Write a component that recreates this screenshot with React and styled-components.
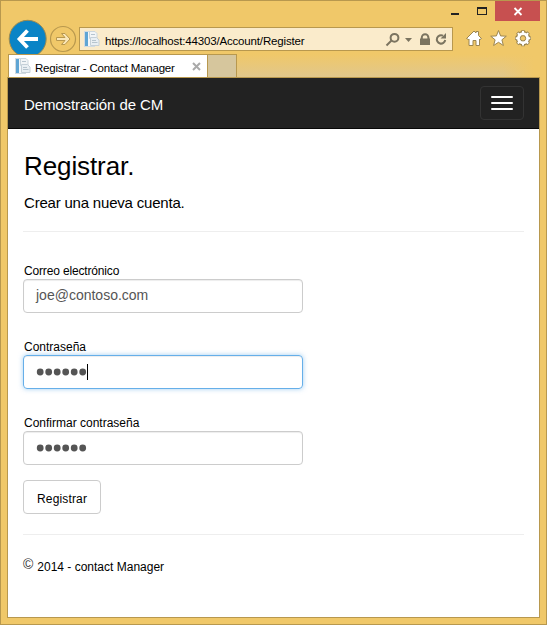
import React from "react";
import styled, { createGlobalStyle } from "styled-components";

const Global = createGlobalStyle`
  *, *::before, *::after { box-sizing: border-box; }
  body { margin: 0; overflow: hidden; }
`;

const Window = styled.div`
  width: 547px;
  height: 625px;
  display: flex;
  flex-direction: column;
  padding: 0 6px 6px 6px;
  background: #f0c869;
  border: 1px solid #b8984e;
  font-family: "Liberation Sans", Arial, sans-serif;
  color: #000;
`;

const Text = styled.span`
  display: block;
  white-space: pre;
  font-size: ${(p) => p.$size}px;
  line-height: ${(p) => p.$line || 16}px;
  letter-spacing: ${(p) => p.$track || 0}px;
  color: ${(p) => p.$color || "inherit"};
`;

const TitleBar = styled.header`
  height: 20px;
  flex: none;
  display: flex;
  justify-content: flex-end;
`;

const CaptionButtons = styled.svg`
  display: block;
`;

const Toolbar = styled.div`
  height: 33px;
  flex: none;
  display: flex;
  align-items: flex-start;
`;

const NavButtons = styled.svg`
  display: block;
  flex: none;
  margin-top: -2px;
`;

const AddressBar = styled.div`
  width: 374px;
  height: 24px;
  margin-top: 6px;
  flex: none;
  display: flex;
  align-items: center;
  background: #faebcb;
  border: 1px solid #b8984e;
  padding-left: 3px;
`;

const Url = styled(Text)`
  flex: 1;
  margin: 3px 0 0 5px;
`;

const AddressTools = styled.svg`
  display: block;
  flex: none;
`;

const BrowserTools = styled.svg`
  display: block;
  margin: 5px 0 0 10px;
`;

const TabStrip = styled.div`
  position: relative;
  height: 23px;
  flex: none;
  display: flex;
  margin-left: 1px;
  background: linear-gradient(to right, rgba(240, 200, 105, 0) 93%, #f0c869 99%),
    linear-gradient(#f0c869, #e1c78b);
`;

const Tab = styled.div`
  width: 200px;
  height: 23px;
  display: flex;
  align-items: center;
  padding-left: 5px;
  background: #fff;
  border: 1px solid #b8984e;
  border-bottom: 0;
`;

const TabTitle = styled(Text)`
  flex: 1;
  margin: 4px 0 0 4px;
`;

const TabClose = styled.svg`
  display: block;
  margin-right: 6px;
`;

const NewTab = styled.div`
  width: 29px;
  height: 23px;
  background: #d6c69d;
  border: 1px solid #b8984e;
  border-left: 0;
  border-bottom: 0;
`;

const Viewport = styled.div`
  flex: 1;
  min-height: 0;
  display: flex;
  flex-direction: column;
  background: #fff;
  border: 1px solid #b8984e;
`;

const Navbar = styled.nav`
  height: 51px;
  flex: none;
  display: flex;
  align-items: center;
  justify-content: space-between;
  padding: 0 15px 0 16px;
  background: #222;
  border-bottom: 1px solid #080808;
`;

const Toggle = styled.button`
  width: 44px;
  height: 34px;
  padding: 0 10px;
  display: flex;
  flex-direction: column;
  justify-content: center;
  gap: 4px;
  background: transparent;
  border: 1px solid #333;
  border-radius: 4px;
`;

const Bar = styled.span`
  height: 2px;
  background: #fff;
  border-radius: 1px;
`;

const Page = styled.main`
  display: flex;
  flex-direction: column;
  padding: 22px 15px 0;
`;

const Rule = styled.hr`
  width: 100%;
  height: 1px;
  flex: none;
  margin: 0;
  border: 0;
  background: #eee;
`;

const Form = styled.form`
  display: flex;
  flex-direction: column;
  align-items: flex-start;
  margin: 31px 0 20px;
`;

const Field = styled.label`
  height: 76px;
  display: flex;
  flex-direction: column;
`;

const Control = styled.span`
  width: 280px;
  height: 34px;
  display: flex;
  align-items: center;
  padding: 0 12px;
  border: 1px solid ${(p) => (p.$focused ? "#66afe9" : "#ccc")};
  border-radius: 4px;
  box-shadow: ${(p) =>
    p.$focused
      ? "inset 0 1px 1px rgba(0,0,0,.075), 0 0 5px rgba(102,175,233,.6)"
      : "inset 0 1px 1px rgba(0,0,0,.075)"};
`;

const Value = styled(Text)`
  margin-top: -2px;
`;

const Caret = styled.span`
  width: 1px;
  height: 16px;
  background: #000;
`;

const Submit = styled.button`
  width: 78px;
  height: 34px;
  margin-top: -11px;
  padding: 3px 0 0 13px;
  text-align: left;
  font-family: inherit;
  color: #000;
  background: #fff;
  border: 1px solid #ccc;
  border-radius: 4px;
`;

const Footer = styled.footer`
  display: flex;
  gap: 4px;
  padding-top: 20px;
`;

const Brand = styled(Text)`
  margin-top: 4px;
`;
const Heading = styled(Text)`
  margin: 0 0 0 1px;
  font-weight: 400;
`;
const Lead = styled(Text)`
  margin: 13px 0 19px 1px;
`;
const LabelText = styled(Text)`
  margin: 0 0 0 1px;
`;
const Copy = styled(Text)`
  margin-top: 4px;
`;

const PageIcon = () => (
  <svg width="17" height="16" viewBox="0 0 17 16">
    <rect x="1.500" y="0.500" width="10" height="15" fill="#f4f7f9" stroke="#d2dbe1" />
    <rect x="2" y="1" width="3" height="14" fill="#5fa5d4" />
    <path d="M6.500 .500h5.500l2 2v5h-7.500z" fill="#f2f5f7" stroke="#cbd6dd" />
    <path d="M8 3.500h4" stroke="#b6c4ce" />
    <path d="M7.500 6.500h6l2.500 2.500v5.500h-8.500z" fill="#e9eff3" stroke="#c5d0d8" />
    <path d="M9 9.500h4M9 11.500h5.500" stroke="#b6c4ce" />
  </svg>
);

const Password = () => (
  <svg width="51" height="10" viewBox="0 0 51 10">
    {Array.from({ length: 6 }, (_, i) => (
      <circle key={i} cx={4.2 + i * 8.5} cy="5" r="3.400" fill="#555" />
    ))}
  </svg>
);

export default function App() {
  return (
    <Window>
      <Global />
      <TitleBar>
        <CaptionButtons width="96" height="20" viewBox="444 1 96 20">
          <rect x="451" y="13" width="8" height="2" fill="#222" />
          <path d="M477 7h10v8h-10zM478 9v5h8V9z" fill="#222" fillRule="evenodd" />
          <rect x="495" y="1" width="45" height="20" fill="#c75050" />
          <path d="M514.500 8l7 7M521.500 8l-7 7" stroke="#fff" strokeWidth="1.800" />
        </CaptionButtons>
      </TitleBar>
      <Toolbar>
        <NavButtons width="72" height="39" viewBox="7 19 72 39">
          <circle cx="27.700" cy="38.800" r="18.500" fill="#0a84c6" stroke="#9c8a50" strokeWidth="1" />
          <path d="M38 39H20M27.500 30.500L19.500 39l8 8.500" fill="none" stroke="#fff" strokeWidth="3.800" />
          <circle cx="63" cy="39" r="12.500" fill="none" stroke="#b8984e" strokeWidth="1.200" />
          <path d="M56.500 37.500h8.500l-3.500-4h3.500l5 5.500-5 5.500h-3.500l3.500-4h-8.500z" fill="#fae7b8" stroke="#b8984e" strokeWidth="1" />
        </NavButtons>
        <AddressBar>
          <PageIcon />
          <Url $size={11.5} $track={-0.16}>https://localhost:44303/Account/Register</Url>
          <AddressTools width="69" height="22" viewBox="383 28 69 22">
            <g fill="none" stroke="#7b7460" strokeWidth="2">
              <circle cx="394.500" cy="37.800" r="3.900" />
              <path d="M391.500 40.500l-5 5" />
              <path d="M421.800 39v-1.500a3.300 3.300 0 0 1 6.600 0V39" />
              <path d="M443 35.700a4.200 4.200 0 1 0 2.200 4.300" />
            </g>
            <path d="M405 38h7l-3.500 4zM420 38.500h10V45H420zM440.500 38.500h5.500V33z" fill="#7b7460" />
          </AddressTools>
        </AddressBar>
        <BrowserTools width="70" height="26" viewBox="463 26 70 26">
          <g fill="#fff" stroke="#9c8650" strokeWidth="1" strokeLinejoin="round">
            <path d="M466.500 38.500l7.500-7.500 2 2v-1.500h2.500v4l3 3-1.500 1-.500-.5v6.500h-3.500v-5h-3v5h-4V39l-.500.500z" />
            <path d="M498.500 30.500l2.100 5.400 5.700.3-4.400 3.600 1.500 5.700-4.900-3.200-4.900 3.200 1.500-5.700-4.400-3.600 5.700-.3z" />
          </g>
          <g fill="none">
            <circle cx="523" cy="38.300" r="5.300" stroke="#9c8650" strokeWidth="4" />
            <path d="M523 30.300v16M515 38.300h16M517.300 32.600l11.400 11.400M528.700 32.600L517.300 44" stroke="#9c8650" strokeWidth="3.600" />
            <path d="M523 31v14.600M515.700 38.300h14.600M517.800 33.100l10.400 10.400M528.200 33.100l-10.400 10.400" stroke="#fff" strokeWidth="2" />
            <circle cx="523" cy="38.300" r="4.600" stroke="#fff" strokeWidth="2.800" />
            <circle cx="523" cy="38.300" r="2.700" fill="#f0c869" stroke="#9c8650" strokeWidth="1" />
          </g>
        </BrowserTools>
      </Toolbar>
      <TabStrip>
        <Tab>
          <PageIcon />
          <TabTitle $size={11.5} $track={-0.2}>Registrar - Contact Manager</TabTitle>
          <TabClose width="9" height="9" viewBox="0 0 9 9">
            <path d="M1 1l7 7M8 1L1 8" stroke="#aaa" strokeWidth="2" />
          </TabClose>
        </Tab>
        <NewTab />
      </TabStrip>
      <Viewport>
        <Navbar>
          <Brand $size={15} $track={-0.1} $line={18} $color="#fff">Demostración de CM</Brand>
          <Toggle aria-label="Menu">
            <Bar />
            <Bar />
            <Bar />
          </Toggle>
        </Navbar>
        <Page>
          <Heading as="h2" $size={26} $track={-0.1} $line={30}>Registrar.</Heading>
          <Lead $size={15} $track={-0.2} $line={18}>Crear una nueva cuenta.</Lead>
          <Rule />
          <Form>
            <Field>
              <LabelText $size={12} $track={-0.16}>Correo electrónico</LabelText>
              <Control>
                <Value $size={14} $color="#555">joe@contoso.com</Value>
              </Control>
            </Field>
            <Field>
              <LabelText $size={12}>Contraseña</LabelText>
              <Control $focused>
                <Password />
                <Caret />
              </Control>
            </Field>
            <Field>
              <LabelText $size={12}>Confirmar contraseña</LabelText>
              <Control>
                <Password />
              </Control>
            </Field>
            <Submit type="button">
              <Text $size={12} $track={0.15}>Registrar</Text>
            </Submit>
          </Form>
          <Rule />
          <Footer>
            <Text $size={14} $line={18} $color="#333">©</Text>
            <Copy $size={12}>2014 - contact Manager</Copy>
          </Footer>
        </Page>
      </Viewport>
    </Window>
  );
}
